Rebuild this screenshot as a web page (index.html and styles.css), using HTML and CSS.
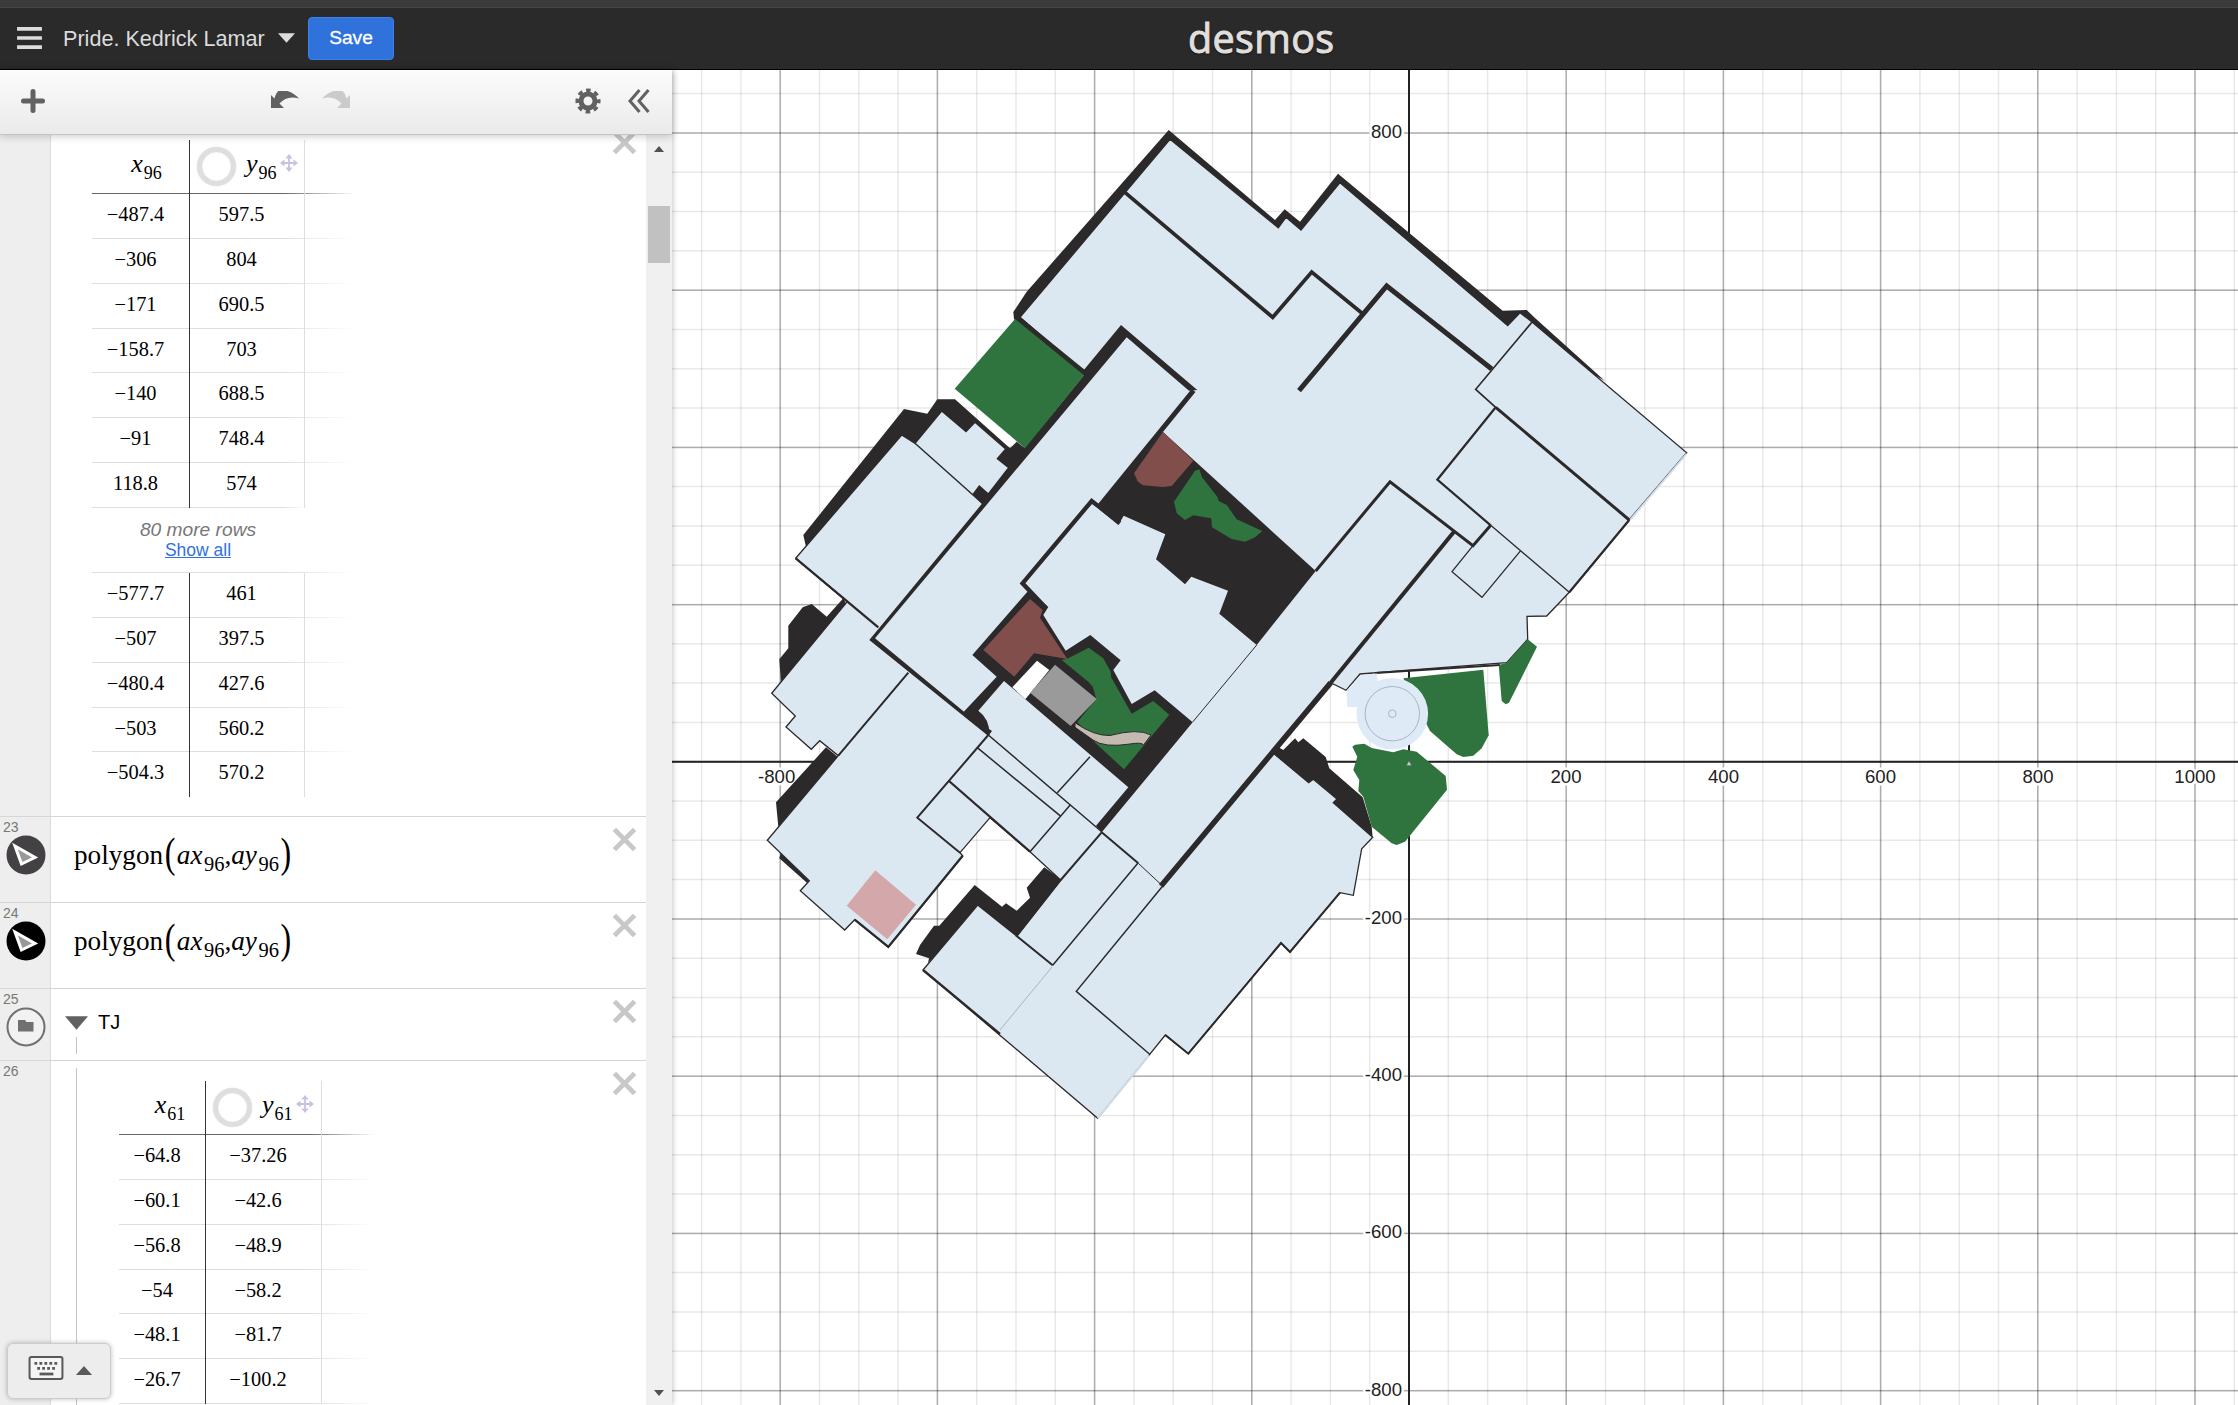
FILE: index.html
```html
<!DOCTYPE html>
<html lang="en">
<head>
<meta charset="utf-8">
<title>Pride. Kedrick Lamar</title>
<link rel="stylesheet" href="styles.css">
</head>
<body>
<svg class="defs" width="0" height="0">
  <symbol id="close" viewBox="0 0 26 26"><path d="M2.5 2.500 23.500 23.500M23.500 2.500 2.500 23.500" stroke="#c8c8c8" stroke-width="5" fill="none"/></symbol>
  <symbol id="move" viewBox="0 0 20 20"><path d="M10 2V18M2 10H18" stroke="#c9c0e2" stroke-width="2"/><path d="M10 0 14 5H6ZM10 20 14 15H6ZM0 10 5 6V14ZM20 10 15 6V14Z" fill="#c9c0e2"/></symbol>
  <symbol id="poly" viewBox="0 0 40 40"><circle cx="20" cy="20" r="19.500"/><path d="M9 11 29 22.500 15.500 29Z" fill="#999" stroke="#fff" stroke-width="3"/></symbol>
</svg>
<header class="topbar">
  <svg class="burger" viewBox="0 0 26 23"><path d="M0 2H26M0 11.500H26M0 21H26" stroke="#dcdcdc" stroke-width="3.800"/></svg>
  <div class="title">Pride. Kedrick Lamar</div>
  <svg class="caret" viewBox="0 0 18 10"><path d="M0 0H18L9 10Z" fill="#dcdcdc"/></svg>
  <button class="save">Save</button>
  <div class="logo">desmos</div>
</header>
<main class="app">
  <aside class="sidebar">
    <div class="toolbar">
      <svg class="i-plus" viewBox="0 0 24 24"><path d="M12 2.500V21.500M2.500 12H21.500" stroke="#616161" stroke-width="5" stroke-linecap="round"/></svg>
      <svg class="i-undo" viewBox="0 0 30 18"><path d="M1 4V17H14L9.500 12.500Q17 4 29 7.500 20-2 9-0.500 6 1.500 4.500 7.500Z" fill="#616161"/></svg>
      <svg class="i-redo" viewBox="0 0 30 18"><path d="M29 4V17H16L20.500 12.500Q13 4 1 7.500 10-2 21-0.500 24 1.500 25.500 7.500Z" fill="#cbcbcb"/></svg>
      <svg class="i-gear" viewBox="0 0 26 26"><circle cx="13" cy="13" r="7" fill="none" stroke="#616161" stroke-width="5"/><circle cx="13" cy="13" r="10.800" fill="none" stroke="#616161" stroke-width="3.500" stroke-dasharray="4.600 3.882" stroke-dashoffset="2.300"/></svg>
      <svg class="i-fold" viewBox="0 0 22 24"><path d="M11.500 1 2 12 11.500 23M20.500 1 11 12 20.500 23" fill="none" stroke="#616161" stroke-width="3"/></svg>
    </div>
    <div class="body">
      <div class="list">
        <section class="entry tall">
          <div class="gutter"></div>
          <div class="content t1">
            <div class="row head"><div class="c1"><i>x</i><sub>96</sub></div><div class="c2"><span class="ring"></span><span class="v"><i>y</i><sub>96</sub></span><svg class="mv"><use href="#move"/></svg></div></div>
            <div class="row"><div class="c1">−487.4</div><div class="c2">597.5</div></div>
            <div class="row"><div class="c1">−306</div><div class="c2">804</div></div>
            <div class="row"><div class="c1">−171</div><div class="c2">690.5</div></div>
            <div class="row"><div class="c1">−158.7</div><div class="c2">703</div></div>
            <div class="row"><div class="c1">−140</div><div class="c2">688.5</div></div>
            <div class="row"><div class="c1">−91</div><div class="c2">748.4</div></div>
            <div class="row cut"><div class="c1">118.8</div><div class="c2">574</div></div>
            <div class="more"><em>80 more rows</em><a>Show all</a></div>
            <div class="row"><div class="c1">−577.7</div><div class="c2">461</div></div>
            <div class="row"><div class="c1">−507</div><div class="c2">397.5</div></div>
            <div class="row"><div class="c1">−480.4</div><div class="c2">427.6</div></div>
            <div class="row"><div class="c1">−503</div><div class="c2">560.2</div></div>
            <div class="row last"><div class="c1">−504.3</div><div class="c2">570.2</div></div>
          </div>
          <svg class="x"><use href="#close"/></svg>
        </section>
        <section class="entry expr">
          <div class="gutter"><span>23</span><svg class="badge" fill="#444145"><use href="#poly"/></svg></div>
          <div class="content math">polygon<b>(</b><i>ax</i><sub>96</sub>,<i>ay</i><sub>96</sub><b>)</b></div>
          <svg class="x"><use href="#close"/></svg>
        </section>
        <section class="entry expr">
          <div class="gutter"><span>24</span><svg class="badge" fill="#000"><use href="#poly"/></svg></div>
          <div class="content math">polygon<b>(</b><i>ax</i><sub>96</sub>,<i>ay</i><sub>96</sub><b>)</b></div>
          <svg class="x"><use href="#close"/></svg>
        </section>
        <section class="entry folder">
          <div class="gutter"><span>25</span><svg class="badge" viewBox="0 0 40 40"><circle cx="20" cy="20" r="18.500" fill="#f2f2f2" stroke="#707070" stroke-width="2"/><path d="M12 13H19L20.500 15H27.500V24.500H12Z" fill="#707070"/></svg></div>
          <div class="content fold"><svg class="tri" viewBox="0 0 24 14"><path d="M0 0H24L12 14Z" fill="#616161"/></svg>TJ</div>
          <svg class="x"><use href="#close"/></svg>
        </section>
        <section class="entry second">
          <div class="gutter"><span>26</span></div>
          <div class="content t2">
            <div class="row head"><div class="c1"><i>x</i><sub>61</sub></div><div class="c2"><span class="ring"></span><span class="v"><i>y</i><sub>61</sub></span><svg class="mv"><use href="#move"/></svg></div></div>
            <div class="row"><div class="c1">−64.8</div><div class="c2">−37.26</div></div>
            <div class="row"><div class="c1">−60.1</div><div class="c2">−42.6</div></div>
            <div class="row"><div class="c1">−56.8</div><div class="c2">−48.9</div></div>
            <div class="row"><div class="c1">−54</div><div class="c2">−58.2</div></div>
            <div class="row"><div class="c1">−48.1</div><div class="c2">−81.7</div></div>
            <div class="row"><div class="c1">−26.7</div><div class="c2">−100.2</div></div>
          </div>
          <svg class="x"><use href="#close"/></svg>
        </section>
      </div>
      <div class="scroll">
        <svg viewBox="0 0 10 6"><path d="M0 6H10L5 0Z" fill="#505050"/></svg>
        <div class="thumb"></div>
        <svg viewBox="0 0 10 6"><path d="M0 0H10L5 6Z" fill="#505050"/></svg>
      </div>
    </div>
    <button class="keypad">
      <svg class="kb" viewBox="0 0 38 26"><rect x="1.200" y="1.200" width="35.600" height="23.600" rx="2" fill="#f5f5f5" stroke="#5a5a5a" stroke-width="2.200"/><path d="M6.500 8H32M9.500 13.500H30" stroke="#5a5a5a" stroke-width="3" stroke-dasharray="3 2.400"/><path d="M12 19.500H27" stroke="#5a5a5a" stroke-width="3"/></svg>
      <svg class="up" viewBox="0 0 16 9"><path d="M0 9H16L8 0Z" fill="#5a5a5a"/></svg>
    </button>
  </aside>
  <svg class="graph" viewBox="672 70 1566 1335">
    <g fill="none" stroke="#000">
      <path d="M661.550 737.500H2238" stroke-width="1335" stroke-dasharray="1.500 37.800" opacity=".09"/>
      <path d="M1455 53.550V1405" stroke-width="1566" stroke-dasharray="1.500 37.800" opacity=".09"/>
      <path d="M622.250 737.500H2238" stroke-width="1335" stroke-dasharray="1.500 155.700" opacity=".26"/>
      <path d="M1455 -24.850V1405" stroke-width="1566" stroke-dasharray="1.500 155.700" opacity=".26"/>
      <path d="M1409 70V1405M672 761.700H2238" stroke-width="2" stroke="#222"/>
    </g>
    <g class="labels">
      <g text-anchor="middle"><text x="776.700" y="783">-800</text><text x="1566" y="783">200</text><text x="1723.500" y="783">400</text><text x="1880.500" y="783">600</text><text x="2038" y="783">800</text><text x="2195" y="783">1000</text></g>
      <g text-anchor="end"><text x="1402" y="138">800</text><text x="1402" y="924">-200</text><text x="1402" y="1081">-400</text><text x="1402" y="1238">-600</text><text x="1402" y="1395.500">-800</text></g>
    </g>
    <!-- shadow walls behind the rooms -->
    <g fill="#2c292b">
      <path d="M1168.700 130 1275 220 1284.700 209.300 1300 221.700 1338 173.700 1502.700 310.700 1526.700 310 1535 318 1605 381 1560 355 1510 345 1340 230 1200 300 1090 385 1014 319 1013.300 312 1026.700 291.700Z"/>
      <path d="M904 409 927.300 413.700 937.300 399.300H955L1010 448.300 1016.700 441.700 1025 448.300 982 508 915 470 806 546.700 803.300 535Z"/>
      <path d="M843.300 598.300 826.700 616.700 811.700 604 802.700 607.300 788.300 625.700V648.300L779.300 659.300 781 682.700 847.300 606Z"/>
      <path d="M826 747.300 776 802.300 778.300 826.700 838 757ZM779.300 858.300 781 852 809.300 880.700 807.700 883.500Z"/>
      <path d="M1044.300 867.300 1026.700 887.700 1030 897.700 1016.700 910.700 1006 903.300 1002 906.700 974.700 885 939.300 925.700H934L920 945 916 954 929 958.300 928 963 977.700 910 1016.700 937 1062 880Z"/>
      <path d="M1272.700 752.700 1279.300 747.700 1283.300 750 1295 738.300 1298.300 742.300 1303.300 738.300 1325.700 757 1329.300 768.300 1362.700 797.300 1371.700 826.700 1372.700 838 1300 800Z"/>
    </g>
    <!-- building footprint -->
    <path fill="#dce8f1" stroke="#2c292b" stroke-width="1.300" d="M1170 139.300 1278.300 227.700 1286 217.300 1301 230 1340 182.700 1507.700 325.700 1520 312.700 1531.700 321.700 1686.700 452.700 1629 520 1569.300 592.300 1546.700 616 1527 616.300 1527.700 639.300 1506.700 662.700 1360 674 1346 690.300 1330.700 682.700 1272.700 752.700 1308.700 782.700 1313.300 779.300 1337 799 1333.300 802.700 1372.700 837.300 1361.700 848.700 1353.300 895.300 1340 892.700 1290 952 1281 943 1188.300 1053.700 1165.300 1035 1149.700 1054.300 1097.700 1118.300 923 970 977.700 905 1016.700 936 1060.700 880 1030 851.700 990 817.700 960 852.700 962.700 855.700 888.300 947 854.700 919.700 844.700 930 800.300 890.700 809.300 880.700 767.300 840.300 838.300 755.700 819.700 740.700 811.300 749.300 786 727 795.300 716 771.700 693.300 847.300 601.700 795.700 558.300 901.700 435 915 443.300 941.700 411 966 431.700 975 422.300 1005.700 449 997.300 458.700 1008.700 467.700 988.300 494 979.300 486 973.300 494 982.300 503.300 1084 372 1020 317.300Z"/>
    <path d="M1686.700 453.700 1630 520M1149 1055.500 1097.700 1118.300" stroke="#d2dde6" stroke-width="2" fill="none"/>
    <!-- corridor walls and courtyards -->
    <g fill="#2c292b">
      <path d="M1121 325 1083 371 1084 375 1025 448 1010 466 982.300 503.300 869.300 640 988.300 736 992 731 964 711.700 875 638.300 1126.700 337.300 1189 390.700 1197.300 390Z"/>
      <path d="M1162.700 431.700 1315.700 571 1256.700 645 1219.300 613.700 1228 590.700 1191.300 576.700 1185 584.300 1156 559.300 1165.300 534.300 1123.700 515.700 1118.300 525 1099 509Z"/>
      <path d="M1028.300 590.700 1048.300 607 1043.300 615 1065.700 650.700 1090.300 635 1120.700 660.300 1113.300 670 1131.700 704 1154.700 690.300 1192.700 722.300 1101.700 832.300 1096 825.700 1128.300 787.300 1004 681 978.300 710.700Q990 719 989.500 736L963.300 712.300 996.700 676.700 972.300 655Z"/>
    </g>
    <!-- interior walls -->
    <g fill="none" stroke="#2c292b" stroke-linejoin="miter">
      <g stroke-width="5"><path d="M1299 390.700 1386.700 286 1491.700 369"/><path d="M1193.500 390.500 1100 505.500"/><path d="M1017 318 1087 375"/><path d="M1120 523 1091.700 501 1022.500 583.300 1046 608" stroke-width="4.300"/></g>
      <path d="M1124 191.700 1272.700 317.300 1311.700 272 1363 314" stroke-width="3.700"/>
      <path d="M1454 531.700 1330.700 682.700" stroke-width="4"/><path d="M1330.700 682.700 1272 753 1161 886" stroke-width="5.500"/>
      <path d="M1532.300 321.700 1475.700 389.300 1495.700 407.300" stroke-width="1.700"/>
      <path d="M1495.700 407.300 1629.300 520M1490.700 525.300 1473 545.700 1390 481.700 1315.700 571" stroke-width="3"/>
      <path d="M1495.700 407.300 1437.300 479.700 1490.700 525.300M1629.300 520 1569.300 592.300" stroke-width="2.200"/>
      <path d="M1490.700 525.300 1569.300 592.300M1473 545.700 1452 571.700 1482 597.300 1520.700 550.700" stroke-width="1.300"/>
      <path d="M1256.700 645 1192.700 722" stroke-width="1"/>
      <path d="M1101.700 832.300 1138.300 863.300M1101.700 832.300 1060.700 880 1016.700 936 1052.700 965.300M988.300 735 917.300 817.700 960 852.700M908.300 672.700 838.300 755.700" stroke-width="2"/>
      <path d="M1138.300 863.300 1162.700 886" stroke-width="1"/>
      <path d="M1138 863 1052.700 965.300M1162.700 886 1076.300 991.300 1149.700 1054.300M988.300 735 1102 832M977.300 747.700 1060 815.700M1070 805.300 1030 851.700M1090 756.700 1057.300 792.700M915 443.300 982.300 503.300" stroke-width="1.500"/>
      <path d="M1052 967 1000 1030" stroke="#a9b5bd" stroke-width="1"/>
      <path d="M949 781 1030 851.700M962.700 855.700 888.300 947 854.700 919.700M923 970 1000 1034M795.700 558.300 878.300 627.300" stroke-width="2.300"/>
      <path d="M1340 892.700 1290 952 1281 943 1188.300 1053.700 1165.300 1035M1375 673 1500 665" stroke-width="2"/>
    </g>
    <!-- grounds -->
    <g fill="#2f743e">
      <path d="M1015 319 1084 375.300 1025 448.300 954.700 388.700Z"/>
      <path d="M1195 470.700 1199.300 469.300 1202 477.300 1217.300 496.700 1218.700 501 1226.700 505 1236.700 519.300 1262.300 531 1255 537.300 1245 541.700 1231.700 539 1212 527.300 1211.300 518.300 1193.300 515.300 1185 520 1176.700 513.300 1174 501.700Z"/>
      <path d="M1061.700 660 1067.300 658.700 1088.700 647.700 1103.300 658.300 1110.700 671.700 1111 677 1131.700 713.700 1153.300 701 1169.300 714.700 1151.700 736 1124 769.300 1095.700 743.300 1077.300 722 1096.300 699 1092.700 686.700 1088.300 681.700Z"/>
      <path d="M1403.300 678.300 1483.300 669.700 1488.700 735.300 1481.700 748.300 1473.300 755.700 1463.300 757 1456.700 754.300 1430 731Z"/>
      <path d="M1527.700 639.300 1537 646.700 1509 702.700 1505.700 704.300 1501.700 701 1498.700 665 1506.700 662.700Z"/>
      <path d="M1352.300 746.700 1355 744.700 1364.300 743.700 1371.700 748 1393.300 752.300 1403.300 749.300 1416.700 751.700 1445.700 776 1447 789.700 1405 841.700 1396.700 845 1391.700 843.300 1371.700 826.700 1363.300 796.700 1358.300 791 1359.300 780 1353.300 770 1357.300 756.700Z"/>
    </g>
    <path d="M1075 722.700Q1094 736 1110 735.500 1138 728 1151 735L1143.500 745Q1142 742 1130 744 1104 748 1093 740L1075 727.300Z" fill="#c5bab1" stroke="#2c292b" stroke-width="1"/>
    <g fill="#824e4c"><path d="M1163 432 1193.300 460.700 1171.700 486 1163 487 1143 485.300 1138 481.700 1134 473.300Z"/><path d="M1030 599 1042.700 610 1040 617.700 1067.300 659 1034 653.300 1014.300 676.700 983.300 650Z"/></g>
    <path d="M1037 660.700 1049.300 670 1025.300 699.300 1012.300 687.300Z" fill="#fff"/>
    <path d="M1055 664.700 1096.700 699 1070.700 726 1030.300 693Z" fill="#9a9a9a"/>
    <path d="M875.300 870.300 916 904.700 887.300 939.300 846.700 905.700Z" fill="#d4a7aa"/>
    <path d="M1361 675 1377 673.500 1378 690 1357 707H1347.300L1346.500 691Z" fill="#deebf6"/>
    <circle cx="1392.300" cy="713.700" r="35.800" fill="#deebf6"/>
    <g fill="none" stroke="#a9b6c0"><circle cx="1392.300" cy="713.700" r="27.200"/><circle cx="1392.300" cy="713.700" r="3.800"/></g>
    <path d="M1409 761 1411.500 765.500H1406.500Z" fill="#ccd" stroke="#667" stroke-width=".5"/>
  </svg>
</main>
</body>
</html>
```
FILE: styles.css
```css
* { box-sizing: border-box; }
body { margin: 0; width: 2238px; height: 1405px; overflow: hidden; display: flex; flex-direction: column; font-family: "Liberation Sans", Arial, sans-serif; background: #fff; color: #000; }
svg { display: block; flex: none; }
.defs { position: absolute; }
button { font: inherit; padding: 0; }

.topbar { height: 70px; flex: none; display: flex; align-items: center; padding: 6px 0 0 17px; background: #2a2a2a; border-top: 7px solid #3b3b3b; border-bottom: 1px solid #000; box-shadow: inset 0 1px #444; position: relative; }
.burger { width: 25px; height: 22px; margin-top: -6px; }
.title { margin: -5px 0 0 21px; width: 215px; font-size: 21.6px; color: #dcdcdc; white-space: nowrap; }
.caret { width: 17px; height: 10px; margin-top: -6px; }
.save { margin: -6px 0 0 13px; width: 86px; height: 43px; border: 1px solid #3c80ea; border-radius: 4px; background: #2f72dc; color: #fff; font-size: 19.2px; -webkit-text-stroke: .3px #fff; }
.logo { position: absolute; left: 1188px; top: 2px; font: 39.500px/58px "Open Sans", sans-serif; letter-spacing: .35px; color: #e0dfdd; -webkit-text-stroke: 1px #e0dfdd; text-shadow: 0 1px 2px #000; white-space: nowrap; }

.app { display: flex; flex: 1; min-height: 0; }
.sidebar { width: 672px; flex: none; display: flex; flex-direction: column; position: relative; box-shadow: 0 0 6px rgba(0,0,0,.3); z-index: 1; }
.graph { width: 1566px; height: 1335px; }
.labels text { font-size: 18.6px; fill: #222; stroke: #fff; stroke-width: 5px; paint-order: stroke; stroke-linejoin: round; }

.toolbar { height: 65px; flex: none; display: flex; align-items: center; padding: 0 0 2px 21px; background: linear-gradient(#fcfcfc, #eaeaea); border-bottom: 1px solid #c4c4c4; box-shadow: 0 1px 8px rgba(0,0,0,.22); z-index: 2; }
.i-plus { width: 24px; height: 24px; }
.i-undo { width: 30px; height: 18px; margin: -3px 0 0 225px; }
.i-redo { width: 30px; height: 18px; margin: -3px 0 0 21px; }
.i-gear { width: 26px; height: 26px; margin-left: 224px; }
.i-fold { width: 22px; height: 24px; margin-left: 27px; }

.body { flex: 1; min-height: 0; display: flex; }
.list { width: 646px; overflow: hidden; background: #fff; }
.entry { display: flex; position: relative; border-bottom: 1px solid #d6d6d6; }
.gutter { width: 51px; flex: none; background: #eee; border-right: 1px solid #dcdcdc; padding: 2px 0 0 3px; font-size: 14px; color: #777; }
.gutter span { display: block; height: 16px; line-height: 16px; }
.badge { width: 40px; height: 40px; margin: 0 0 0 2.500px; }
.content { flex: 1; }
.x { position: absolute; right: 9px; top: 10px; width: 25px; height: 25px; }
.tall { height: 682px; }
.tall .x { top: -5px; }
.expr { height: 86px; }
.folder { height: 72px; }
.second { height: 400px; }

.t1 { padding: 5px 0 0 41px; --a: 97px; --b: 115px; }
.t2 { margin: 7px 0 0 25px; padding: 13px 0 0 42px; border-left: 1px solid #c4c4c4; --a: 86px; --b: 116px; }
.row { width: 263px; height: 44.87px; display: flex; font: 20.4px "Liberation Serif", "Times New Roman", serif; line-height: 41.500px; background: linear-gradient(90deg, #dedede 0 190px, transparent) bottom / 100% 1px no-repeat; }
.t2 .row { width: 255px; }
.t1 .head, .t2 .head { height: 54px; }
.row.head { background: linear-gradient(90deg, #666 0 190px, transparent) bottom / 100% 1.500px no-repeat; line-height: 48px; font-size: 26px; }
.c1 { width: calc(var(--a) + 1px); border-right: 1.500px solid #333; text-align: center; padding-right: 10px; }
.c2 { width: var(--b); border-right: 1px solid #dedede; text-align: center; padding-right: 11px; }
.head .c1 { padding-left: 20px; padding-right: 8px; }
.t2 .head .c1 { padding-left: 24px; }
.head .c2 { display: flex; align-items: center; padding: 0 0 2px 7px; }
sub { font-size: 18px; line-height: 0; vertical-align: -7px; margin-left: 1px; }
.ring { width: 39px; height: 39px; flex: none; border-radius: 50%; border: 5.500px solid #dedede; box-shadow: inset 0 0 1px #bbb, 0 0 1px #bbb; }
.v { margin-left: 10px; width: 32px; text-align: left; line-height: 48px; height: 52px; }
.mv { width: 18px; height: 18px; margin: -7px 0 0 2px; }
.row.cut { width: 213px; }
.row.last { background: none; }
.more { width: 263px; height: 65px; display: flex; flex-direction: column; align-items: center; padding: 11px 51px 0 0; line-height: 20px; background: linear-gradient(90deg, #dedede 0 190px, transparent) bottom / 100% 1px no-repeat; }
.more em { color: #777; font-size: 19.200px; line-height: 22px; }
.more a { color: #2f72dc; text-decoration: underline; font-size: 17.500px; line-height: 18px; }

.math { font: 27.2px "Liberation Serif", "Times New Roman", serif; padding-left: 23px; line-height: 77px; white-space: nowrap; }
.math b { display: inline-block; font-weight: normal; font-size: 32px; line-height: 1; transform: scaleY(1.300); margin: 0 1.500px; }
.math sub { font-size: 20.500px; margin-left: 1.500px; }
.fold { display: flex; align-items: center; padding: 0 0 4px 14px; font-size: 20px; position: relative; }
.fold::after { content: ""; position: absolute; left: 25px; top: 48px; width: 1px; height: 17px; background: #c4c4c4; }
.tri { width: 23px; height: 14px; margin-right: 10px; }

.scroll { width: 26px; background: #f0f0f0; display: flex; flex-direction: column; align-items: center; padding: 11px 0 9px; }
.scroll svg { width: 10px; height: 6px; }
.thumb { width: 22px; height: 57px; background: #c1c1c1; margin: 54px 0 auto; }
.keypad { position: absolute; left: 7px; bottom: 6px; width: 104px; height: 56px; display: flex; align-items: center; padding: 0 0 6px 19px; background: #ededed; border: 1px solid #ccc; border-radius: 6px; box-shadow: 0 0 5px rgba(0,0,0,.25); }
.kb { width: 38px; height: 24px; }
.up { width: 16px; height: 9px; margin: 5px 0 0 11px; }
```
